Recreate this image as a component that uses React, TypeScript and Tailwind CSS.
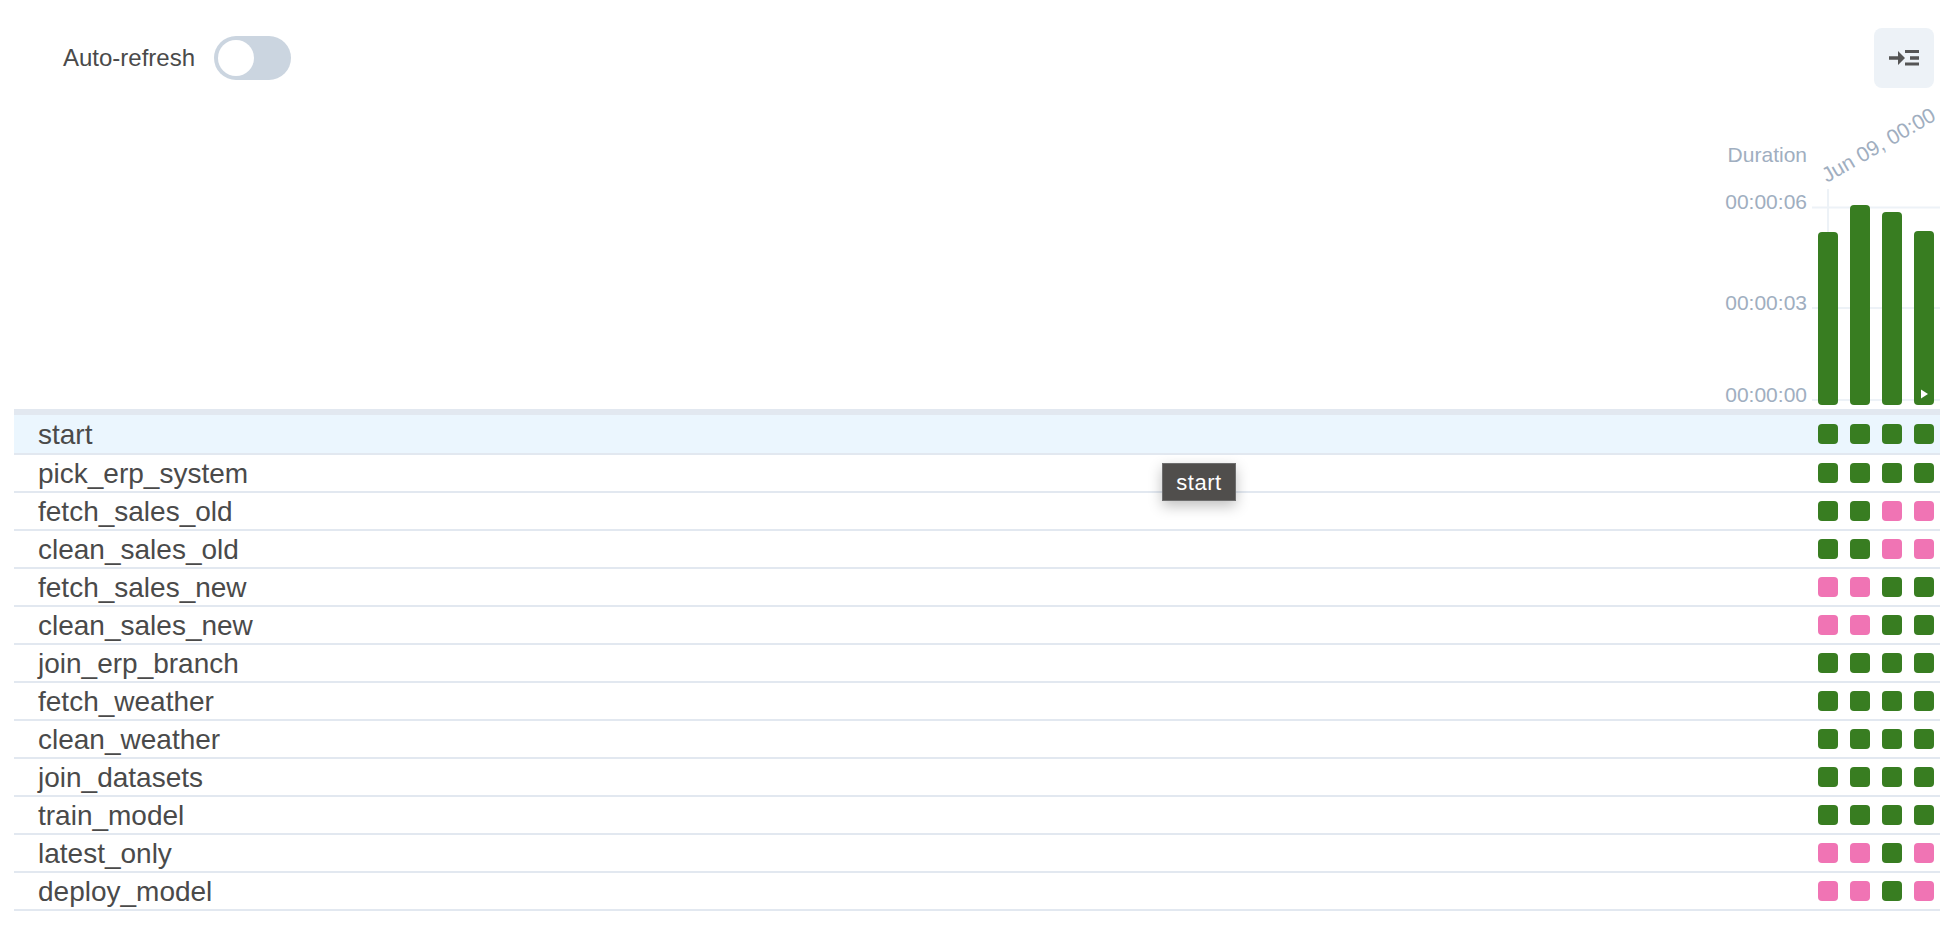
import React from "react";

const GREEN = "bg-[#387d21]";
const PINK = "bg-[#f074b4]";

// g = success, p = skipped
const tasks: { name: string; runs: string }[] = [
  { name: "start", runs: "gggg" },
  { name: "pick_erp_system", runs: "gggg" },
  { name: "fetch_sales_old", runs: "ggpp" },
  { name: "clean_sales_old", runs: "ggpp" },
  { name: "fetch_sales_new", runs: "ppgg" },
  { name: "clean_sales_new", runs: "ppgg" },
  { name: "join_erp_branch", runs: "gggg" },
  { name: "fetch_weather", runs: "gggg" },
  { name: "clean_weather", runs: "gggg" },
  { name: "join_datasets", runs: "gggg" },
  { name: "train_model", runs: "gggg" },
  { name: "latest_only", runs: "ppgp" },
  { name: "deploy_model", runs: "ppgp" },
];

function PanelIcon() {
  return (
    <svg width="32" height="24" viewBox="0 0 32 24" className="text-[#555555]">
      <path d="M1 10.300h9V5l7 7-7 7v-5.300H1z" fill="currentColor" />
      <path d="M17 4h14v3H17zM22 10.300h9v3.400h-9zM17 16.500h14v3H17z" fill="currentColor" />
    </svg>
  );
}

function DurationChart() {
  return (
    <svg width="266" height="325" viewBox="0 0 266 325" className="block">
      <g fill="#edf2f7">
        <rect x="138" y="104.500" width="128" height="2" />
        <rect x="138" y="205" width="128" height="2" />
        <rect x="138" y="297" width="128" height="2" />
        <rect x="153" y="87" width="2" height="216" />
      </g>
      <g fill="#a0aec0" fontFamily="'Liberation Sans', Arial, sans-serif" fontSize="21">
        <text x="133" y="60" textAnchor="end">Duration</text>
        <text x="133" y="107" textAnchor="end">00:00:06</text>
        <text x="133" y="208" textAnchor="end">00:00:03</text>
        <text x="133" y="300" textAnchor="end">00:00:00</text>
        <text transform="translate(153 81) rotate(-30)">Jun 09, 00:00</text>
      </g>
      <g fill="#387d21">
        <rect x="144" y="130" width="20" height="173" rx="4" />
        <rect x="176" y="103" width="20" height="200" rx="4" />
        <rect x="208" y="110" width="20" height="193" rx="4" />
        <rect x="240" y="129" width="20" height="174" rx="4" />
      </g>
      <path d="M247 287.500l7 4.500-7 4.500z" fill="#ffffff" />
    </svg>
  );
}

export default function App() {
  return (
    <div className="relative h-[930px] overflow-hidden bg-white font-['Liberation_Sans',Arial,sans-serif] text-[#4a4a4a]">
      <div className="pl-[14px] pr-[18px]">
        {/* toolbar */}
        <div className="flex h-[102px] items-start justify-between pt-[28px] pr-[6px]">
          <div className="flex items-center pl-[49px] pt-[8px]">
            <span className="mr-[19px] text-[24px] leading-[44px]">Auto-refresh</span>
            <div className="flex h-[44px] w-[77px] items-center rounded-full bg-[#cbd5e0] p-[4px]">
              <div className="h-[36px] w-[36px] rounded-full bg-white" />
            </div>
          </div>
          <button className="flex h-[60px] w-[60px] items-center justify-center rounded-lg bg-[#edf2f7]">
            <PanelIcon />
          </button>
        </div>

        {/* chart */}
        <div className="flex h-[307px] justify-end">
          <DurationChart />
        </div>

        {/* task rows */}
        <div className="border-t-[6px] border-[#e2e8f0]">
          {tasks.map((task, i) => (
            <div
              key={task.name}
              className={`flex items-center justify-between border-b-2 border-[#e2e8f0] pl-[24px] pr-[6px] ${
                i === 0 ? "h-[40px] bg-[#ebf6fe]" : "h-[38px]"
              }`}
            >
              <span className="pt-[2px] text-[28px] leading-none">{task.name}</span>
              <div className="flex gap-[12px]">
                {task.runs.split("").map((r, j) => (
                  <div key={j} className={`h-[20px] w-[20px] rounded-[4px] ${r === "g" ? GREEN : PINK}`} />
                ))}
              </div>
            </div>
          ))}
        </div>
      </div>

      {/* tooltip */}
      <div className="absolute left-[1162px] top-[463px] flex h-[38px] w-[74px] items-center justify-center border border-[#6e6e6e] bg-[#504e4c] text-[22px] tracking-[0.5px] text-white shadow-[0_5px_14px_rgba(0,0,0,0.25)]">
        start
      </div>
    </div>
  );
}
